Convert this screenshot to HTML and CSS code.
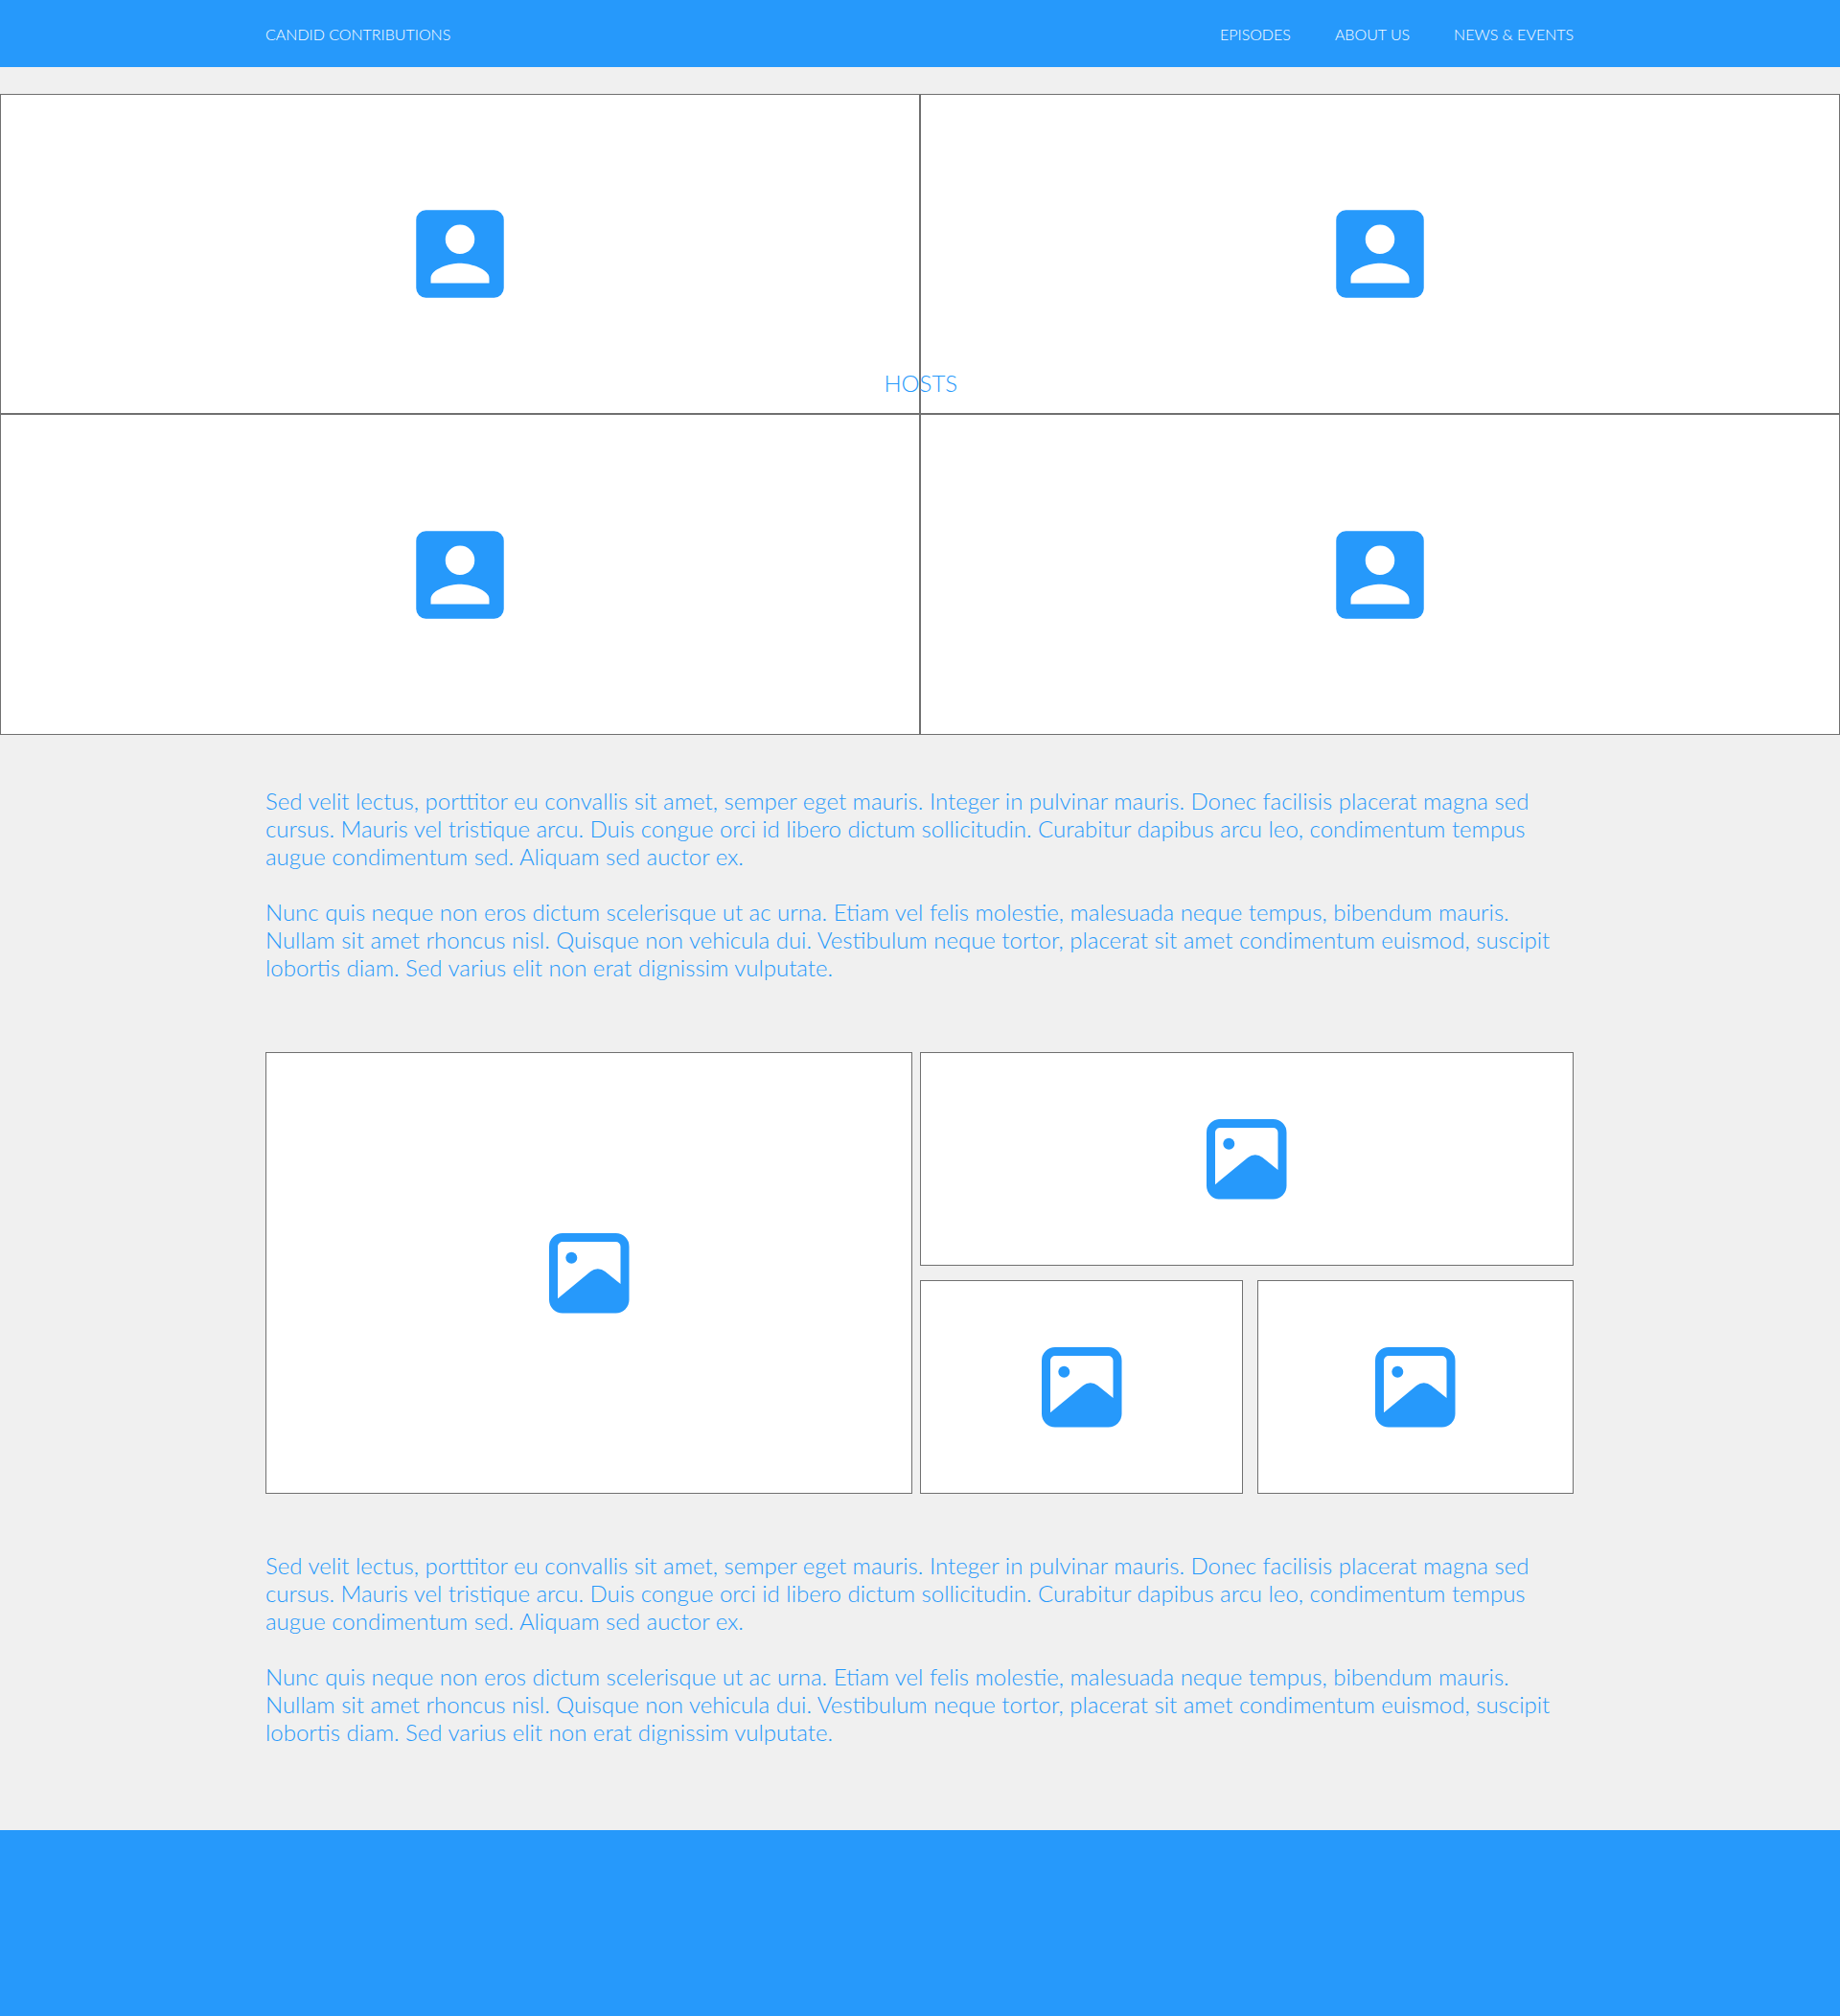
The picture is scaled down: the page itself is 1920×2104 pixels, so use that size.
FILE: index.html
```html
<!DOCTYPE html>
<html lang="en">
<head>
<meta charset="utf-8">
<title>Candid Contributions</title>
<link rel="stylesheet" href="styles.css">
</head>
<body>
<svg class="sprite" aria-hidden="true">
  <symbol id="account" viewBox="2.95 2.95 18.1 18.1">
    <path d="M3 5v14a2 2 0 0 0 2 2h14a2 2 0 0 0 2-2V5a2 2 0 0 0-2-2H5a2 2 0 0 0-2 2zm12 4a3 3 0 1 1-6 0 3 3 0 0 1 6 0zm-9 8c0-2 4-3.1 6-3.1s6 1.1 6 3.1v1H6v-1z"/>
  </symbol>
  <symbol id="image" viewBox="0 0 84 84">
    <path fill-rule="evenodd" d="M14 0H69.5A14 14 0 0 1 83.5 14V69.5A14 14 0 0 1 69.5 83.5H14A14 14 0 0 1 0 69.5V14A14 14 0 0 1 14 0ZM14 9A5 5 0 0 0 9 14V68.2L43.2 39.9A12 12 0 0 1 58.4 39.9L74.5 53V14A5 5 0 0 0 69.5 9Z"/>
    <circle cx="23.3" cy="25.7" r="6"/>
  </symbol>
</svg>
<header class="header">
  <div class="container bar">
    <a class="brand">CANDID CONTRIBUTIONS</a>
    <nav class="nav"><a>EPISODES</a><a>ABOUT US</a><a>NEWS &amp; EVENTS</a></nav>
  </div>
</header>
<main>
  <section class="hosts">
    <div class="tile"><svg class="account"><use href="#account"/></svg></div>
    <div class="tile"><svg class="account"><use href="#account"/></svg></div>
    <div class="tile"><svg class="account"><use href="#account"/></svg></div>
    <div class="tile"><svg class="account"><use href="#account"/></svg></div>
    <h1 class="title">HOSTS</h1>
  </section>
  <section class="container copy">
    <p>Sed velit lectus, porttitor eu convallis sit amet, semper eget mauris. Integer in pulvinar mauris. Donec facilisis placerat magna sed cursus. Mauris vel tristique arcu. Duis congue orci id libero dictum sollicitudin. Curabitur dapibus arcu leo, condimentum tempus augue condimentum sed. Aliquam sed auctor ex.</p>
    <p>Nunc quis neque non eros dictum scelerisque ut ac urna. Etiam vel felis molestie, malesuada neque tempus, bibendum mauris. Nullam sit amet rhoncus nisl. Quisque non vehicula dui. Vestibulum neque tortor, placerat sit amet condimentum euismod, suscipit lobortis diam. Sed varius elit non erat dignissim vulputate.</p>
  </section>
  <section class="container gallery">
    <div class="tile"><svg class="image"><use href="#image"/></svg></div>
    <div class="side">
      <div class="tile wide"><svg class="image"><use href="#image"/></svg></div>
      <div class="tile"><svg class="image"><use href="#image"/></svg></div>
      <div class="tile"><svg class="image"><use href="#image"/></svg></div>
    </div>
  </section>
  <section class="container copy">
    <p>Sed velit lectus, porttitor eu convallis sit amet, semper eget mauris. Integer in pulvinar mauris. Donec facilisis placerat magna sed cursus. Mauris vel tristique arcu. Duis congue orci id libero dictum sollicitudin. Curabitur dapibus arcu leo, condimentum tempus augue condimentum sed. Aliquam sed auctor ex.</p>
    <p>Nunc quis neque non eros dictum scelerisque ut ac urna. Etiam vel felis molestie, malesuada neque tempus, bibendum mauris. Nullam sit amet rhoncus nisl. Quisque non vehicula dui. Vestibulum neque tortor, placerat sit amet condimentum euismod, suscipit lobortis diam. Sed varius elit non erat dignissim vulputate.</p>
  </section>
</main>
<footer class="footer"></footer>
</body>
</html>
```
FILE: styles.css
```css
* { box-sizing: border-box; }
body {
  margin: 0;
  min-height: 2104px;
  display: flex;
  flex-direction: column;
  background: #f0f0f0;
  color: #2699fb;
  font-family: Lato, sans-serif;
  font-weight: 300;
}
.sprite { display: none; }
.container { width: 1365px; margin-left: 277px; }
.header { height: 70px; background: #2699fb; color: #fff; font-size: 16px; line-height: 20px; }
.bar { height: 100%; padding-top: 1px; display: flex; align-items: center; justify-content: space-between; }
.nav { display: flex; gap: 46px; }
.tile {
  display: flex;
  align-items: center;
  justify-content: center;
  background: #fff;
  border: 1px solid #707070;
}
.tile svg { fill: #2699fb; }
.account { width: 92px; height: 92px; }
.image { width: 84px; height: 84px; }
.hosts {
  position: relative;
  margin-top: 28px;
  display: grid;
  grid-template-columns: 1fr 1fr;
  grid-template-rows: 334px 335px;
}
.title {
  position: absolute;
  top: 287px;
  left: 922.5px;
  margin: 0;
  font-size: 24px;
  font-weight: 300;
  line-height: 29px;
}
.copy { height: 331px; padding-top: 54px; font-size: 24px; line-height: 29px; }
.copy p { margin: 0 0 29px; }
.gallery { display: grid; grid-template-columns: 675px 682px; gap: 8px; height: 461px; }
.side { display: grid; grid-template-columns: 337px 330px; grid-template-rows: 223px 223px; gap: 15px; }
.wide { grid-column: span 2; }
.gallery + .copy { height: 351px; padding-top: 60px; }
.footer { flex: 1; background: #2699fb; }
```
